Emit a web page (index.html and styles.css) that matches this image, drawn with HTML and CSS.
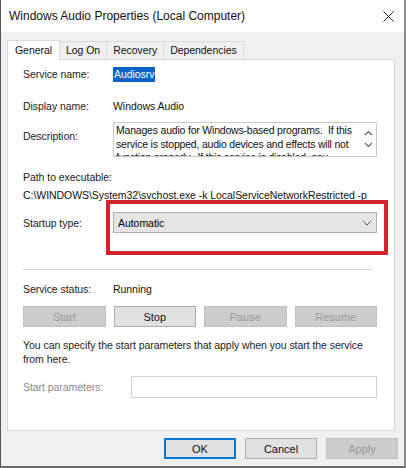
FILE: index.html
```html
<!DOCTYPE html>
<html lang="en">
<head>
    <meta charset="UTF-8" />
    <meta name="viewport" content="width=device-width, initial-scale=1.0" />
    <title>Windows Audio Properties</title>
    <link rel="stylesheet" href="styles.css">
</head>
<body>
    <div class="window">
        <div class="titlebar">
            <span class="title">Windows Audio Properties (Local Computer)</span>
            <svg class="close" width="11" height="11" viewBox="0 0 11 11">
                <path d="M0.5 0.5 L10.5 10.5 M10.5 0.5 L0.5 10.5" stroke="#222" stroke-width="1" fill="none" />
            </svg>
        </div>

        <div class="tabs">
            <div class="tab active">General</div>
            <div class="tab">Log On</div>
            <div class="tab">Recovery</div>
            <div class="tab">Dependencies</div>
        </div>

        <div class="panel">
            <div class="row">
                <span class="label">Service name:</span>
                <span class="value selected">Audiosrv</span>
            </div>
            <div class="row row-display">
                <span class="label">Display name:</span>
                <span class="value">Windows Audio</span>
            </div>
            <div class="row row-desc">
                <span class="label">Description:</span>
                <div class="desc-box">
                    <div class="desc-text">Manages audio for Windows-based programs.&nbsp; If this<br>service is stopped, audio devices and effects will not<br>function properly.&nbsp; If this service is disabled, any</div>
                    <div class="scroll">
                        <svg width="9" height="6" viewBox="0 0 9 6"><path d="M1 5 L4.5 1.5 L8 5" stroke="#606060" stroke-width="1.2" fill="none" /></svg>
                        <svg width="9" height="6" viewBox="0 0 9 6"><path d="M1 1 L4.5 4.5 L8 1" stroke="#606060" stroke-width="1.2" fill="none" /></svg>
                    </div>
                </div>
            </div>
            <div class="path-label">Path to executable:</div>
            <div class="path">C:\WINDOWS\System32\svchost.exe -k LocalServiceNetworkRestricted -p</div>

            <div class="row row-startup">
                <span class="label">Startup type:</span>
                <div class="select">
                    <span>Automatic</span>
                    <svg width="10" height="6" viewBox="0 0 10 6"><path d="M1 1 L5 5 L9 1" stroke="#555" stroke-width="1" fill="none" /></svg>
                </div>
                <div class="highlight"></div>
            </div>

            <div class="separator"></div>

            <div class="row row-status">
                <span class="label">Service status:</span>
                <span class="value">Running</span>
            </div>
            <div class="buttons">
                <button class="btn" disabled>Start</button>
                <button class="btn">Stop</button>
                <button class="btn" disabled>Pause</button>
                <button class="btn" disabled>Resume</button>
            </div>
            <p class="hint">You can specify the start parameters that apply when you start the service<br>from here.</p>
            <div class="row row-params">
                <span class="label label-params">Start parameters:</span>
                <div class="input"></div>
            </div>
        </div>

        <div class="footer">
            <button class="btn btn-foot btn-default">OK</button>
            <button class="btn btn-foot">Cancel</button>
            <button class="btn btn-foot" disabled>Apply</button>
        </div>
    </div>
</body>
</html>
```

FILE: styles.css
```css
* { box-sizing: border-box; margin: 0; padding: 0; }
body {
    font-family: "Segoe UI", "Liberation Sans", Arial, sans-serif;
    font-size: 10.5px;
    letter-spacing: -0.05px;
    color: #000;
    background: #f0f0f0;
}
.window {
    width: 406px;
    height: 468px;
    background: #f0f0f0;
    border-left: 1px solid #555;
    border-right: 2px solid #8a8a8a;
    border-bottom: 2px solid #6a6a6a;
}
.titlebar {
    height: 32px;
    background: #fff;
    display: flex;
    align-items: center;
    justify-content: space-between;
    padding: 0 10px 0 8px;
}
.title {
    font-size: 12px;
    letter-spacing: 0;
    color: #111;
}

/* Tabs */
.tabs {
    display: flex;
    align-items: flex-end;
    margin: 7px 0 0 6px;
    height: 20px;
}
.tab {
    height: 18px;
    line-height: 16px;
    padding: 0 6px;
    border: 1px solid #d9d9d9;
    border-bottom: none;
    border-left: none;
    background: #f0f0f0;
    color: #111;
    font-size: 10.5px;
}
.tab.active {
    height: 20px;
    line-height: 18px;
    background: #fff;
    border-left: 1px solid #d9d9d9;
    padding: 0 7px;
    margin-bottom: -1px;
    position: relative;
}
.panel {
    margin: 0 9px 0 6px;
    height: 372px;
    background: #fff;
    border: 1px solid #d9d9d9;
    padding: 6px 17px 0 15px;
}

/* Rows */
.row {
    display: flex;
    align-items: center;
    height: 16px;
}
.label {
    width: 90px;
    flex-shrink: 0;
    color: #222;
}
.value { color: #111; }
.selected {
    background: #0a64c8;
    color: #fff;
    padding: 0 1px;
    line-height: 15px;
}
.row-display { margin-top: 16px; }
.row-desc {
    margin-top: 8px;
    height: 35px;
    align-items: flex-start;
}
.row-desc .label { margin-top: 8px; }
.desc-box {
    flex: 1;
    height: 35px;
    border: 1px solid #c8c8c8;
    display: flex;
    overflow: hidden;
}
.desc-text {
    flex: 1;
    padding: 1px 2px;
    line-height: 13.5px;
    letter-spacing: -0.2px;
    white-space: nowrap;
    overflow: hidden;
    color: #111;
}
.scroll {
    width: 16px;
    display: flex;
    flex-direction: column;
    align-items: center;
    gap: 6px;
    padding-top: 7px;
}
.path-label {
    margin-top: 12px;
    line-height: 16px;
    color: #222;
}
.path {
    margin-top: 2px;
    line-height: 16px;
    white-space: nowrap;
    overflow: hidden;
    width: 356px;
    color: #111;
}

/* Startup */
.row-startup {
    margin-top: 9px;
    height: 21px;
    position: relative;
}
.select {
    flex: 1;
    height: 21px;
    background: #e5e5e5;
    border: 1px solid #adadad;
    display: flex;
    align-items: center;
    justify-content: space-between;
    padding: 0 4px 0 4px;
}
.highlight {
    position: absolute;
    left: 83px;
    top: -12px;
    width: 282px;
    height: 55px;
    border: 4px solid #d52230;
}
.separator {
    height: 1px;
    background: #d4d4d4;
    margin: 36px 5px 0 0;
}
.row-status { margin-top: 11px; }

/* Buttons */
.buttons {
    display: flex;
    gap: 8px;
    margin-top: 9px;
}
.btn {
    font-family: inherit;
    font-size: 11px;
    width: 83px;
    height: 21px;
    background: #e1e1e1;
    border: 1px solid #adadad;
    color: #111;
}
.btn:disabled {
    background: #cccccc;
    border-color: #bfbfbf;
    color: #9a9a9a;
}
.hint {
    margin-top: 11px;
    line-height: 14px;
    color: #222;
}
.row-params {
    margin-top: 10px;
    height: 22px;
}
.label-params {
    width: 108px;
    color: #8a8a8a;
}
.input {
    flex: 1;
    height: 22px;
    border: 1px solid #cfcfcf;
    background: #fff;
}

/* Footer */
.footer {
    display: flex;
    justify-content: flex-end;
    gap: 9px;
    padding: 7px 6px 0 0;
}
.btn-foot {
    width: 72px;
    height: 21px;
}
.btn-default {
    border: 2px solid #0078d7;
}
```
